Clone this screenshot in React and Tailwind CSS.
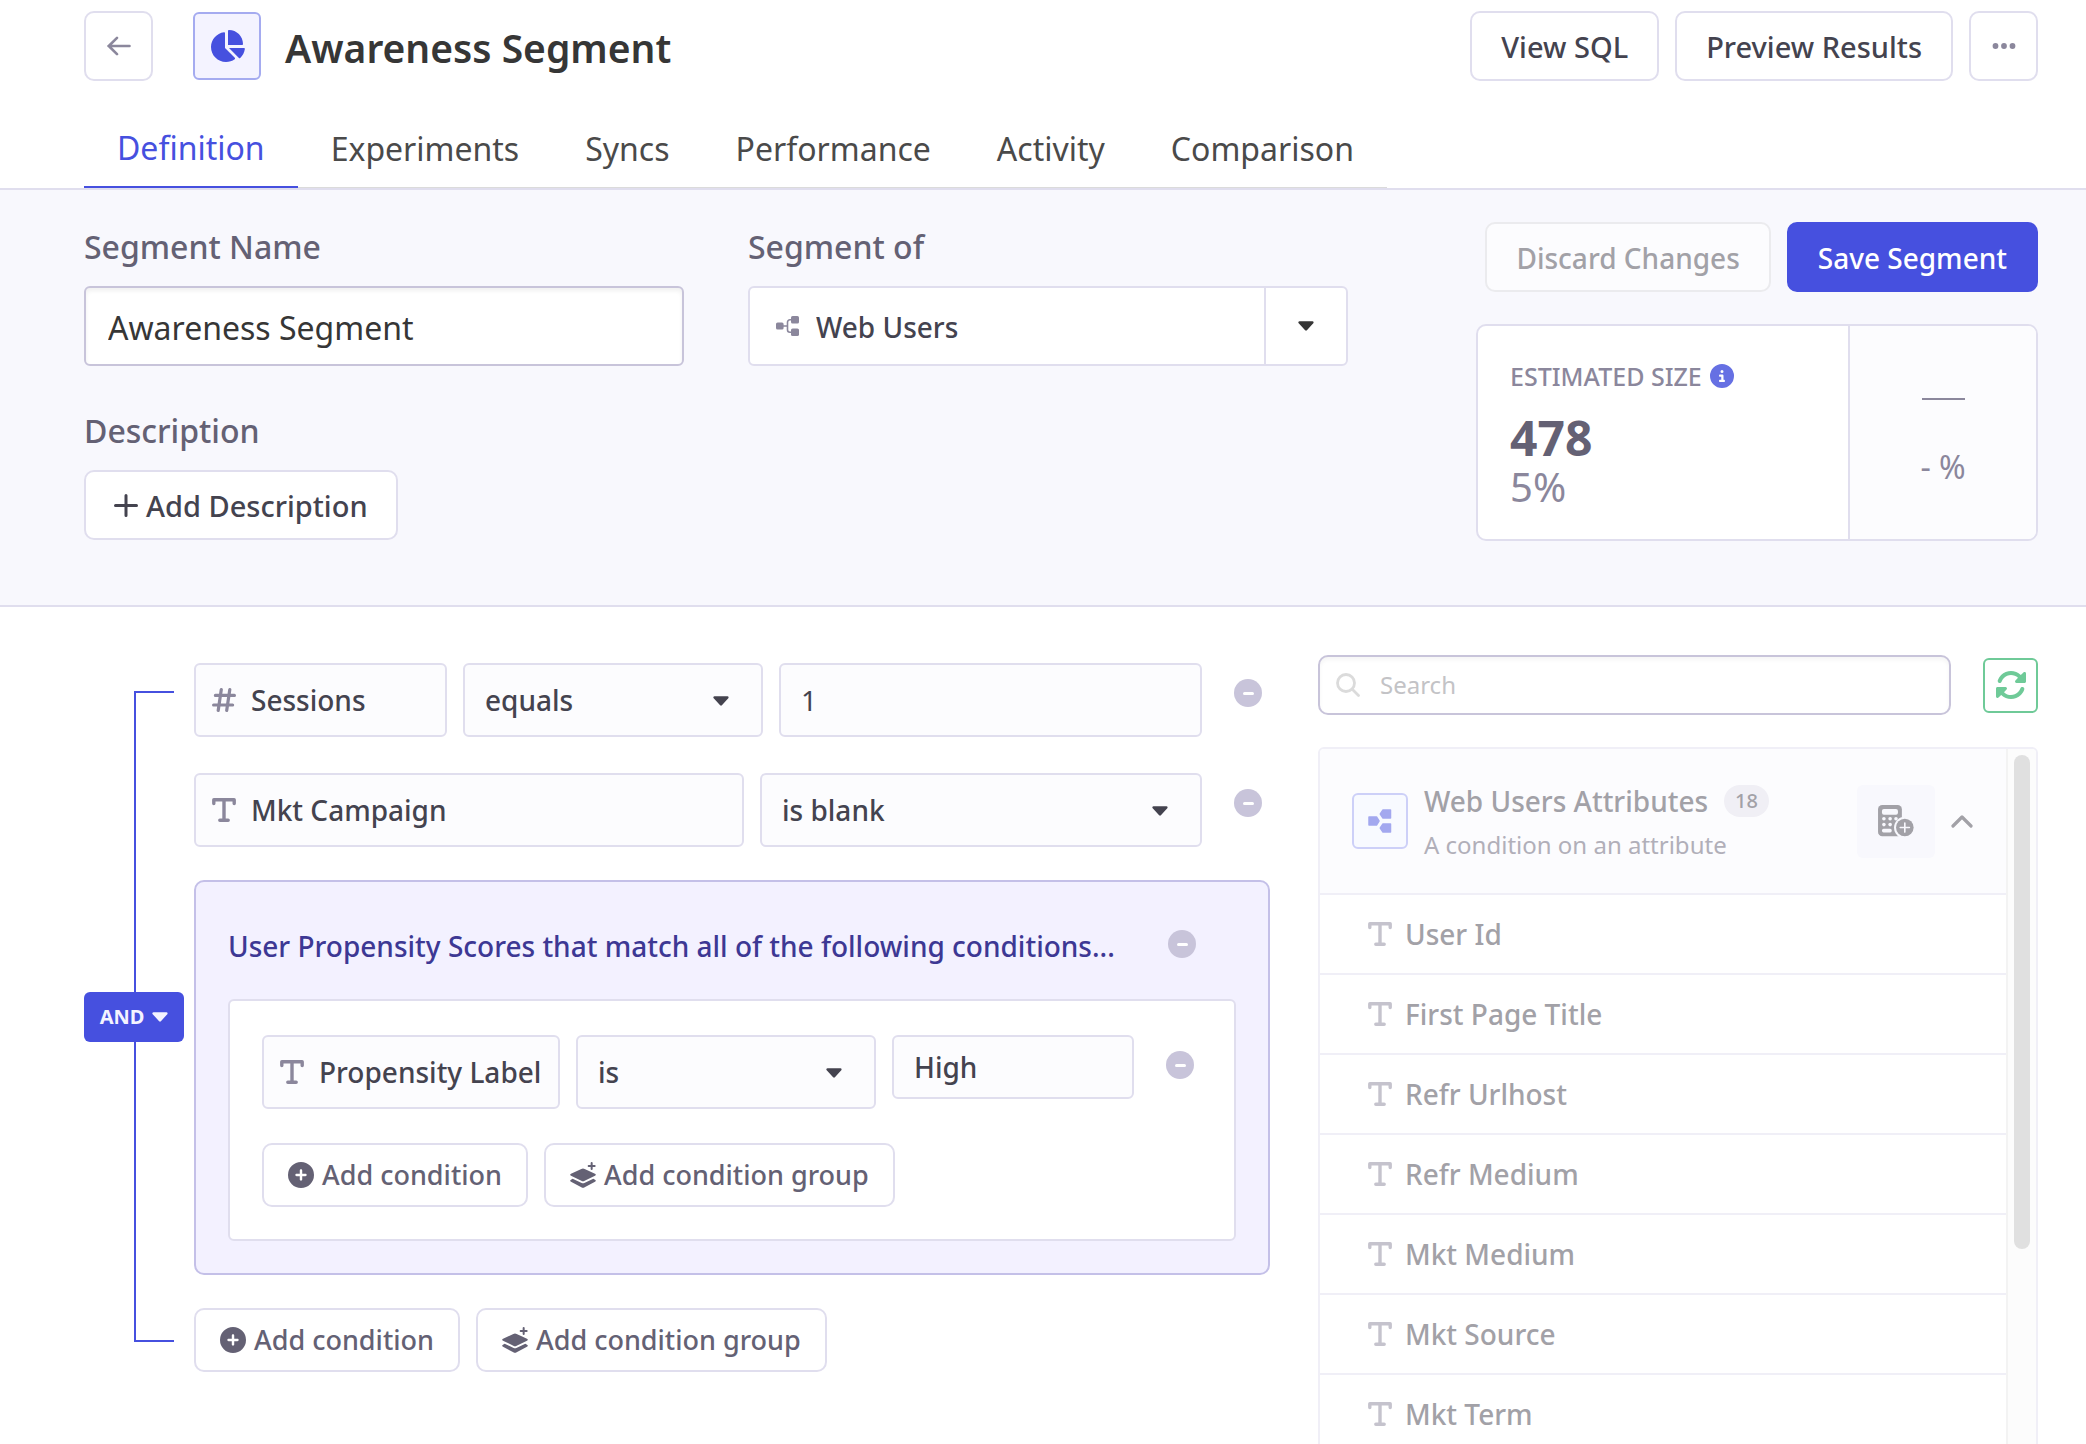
import { FaRotate, FaChartPie, FaCircleInfo, FaCirclePlus } from "react-icons/fa6";

function Caret({ className = "" }) {
  return (
    <svg viewBox="0 0 16 10" className={"pointer-events-none h-[10px] w-4 shrink-0 " + className} fill="currentColor" stroke="currentColor" strokeWidth="2.4" strokeLinejoin="round" aria-hidden="true">
      <path d="M1.6 1.4h12.8L8 8.4z" />
    </svg>
  );
}

function TextIcon({ className = "" }) {
  return (
    <svg viewBox="0 0 24 24" className={"size-6 shrink-0 " + className} fill="none" stroke="currentColor" strokeWidth="3.4" strokeLinecap="round" strokeLinejoin="round" aria-hidden="true">
      <path d="M1.8 5.6V1.8h20.4v3.8M12 2v20M7.8 22.2h8.4" />
    </svg>
  );
}

function HashIcon({ className = "" }) {
  return (
    <svg viewBox="0 0 24 24" className={"size-6 shrink-0 " + className} fill="none" stroke="currentColor" strokeWidth="3.2" strokeLinecap="round" aria-hidden="true">
      <path d="M3.4 7.4h19M1.6 17h19M9.3 1.6 6.2 22.4M17.8 1.6l-3.1 20.8" />
    </svg>
  );
}

function NodesIcon() {
  return (
    <svg viewBox="0 0 23 20" className="h-5 w-[23px] shrink-0 text-[#8b879c]" fill="currentColor" aria-hidden="true">
      <rect x="0" y="6.4" width="7.6" height="7.2" rx="1.6" />
      <rect x="15" y="0" width="8" height="7.6" rx="1.6" />
      <rect x="15" y="12.4" width="8" height="7.6" rx="1.6" />
      <path d="M7 10h4.5M15.5 3.8h-1.6a2.4 2.4 0 0 0-2.4 2.4v7.6a2.4 2.4 0 0 0 2.4 2.4h1.6" fill="none" stroke="currentColor" strokeWidth="1.6" />
    </svg>
  );
}

function LayersPlusIcon() {
  return (
    <svg viewBox="0 0 78 78" className="size-[26px] shrink-0" fill="currentColor" aria-hidden="true">
      <path d="M34 21q5-3 10 0l31 14q5 3 0 6L44 56q-5 3-10 0L3 41q-5-3 0-6z" />
      <path d="M3 53l5-3 27 13q4 2 8 0l27-13 5 3q5 3 0 6L44 76q-5 3-10 0L3 59q-5-3 0-6z" />
      <path d="M65 3v18M56 12h18" fill="none" stroke="currentColor" strokeWidth="6" strokeLinecap="round" />
    </svg>
  );
}

function CalculatorPlusIcon() {
  return (
    <svg viewBox="0 0 110 98" className="h-8 w-9" aria-hidden="true">
      <rect width="73" height="96" rx="13" fill="#a2a1a7" />
      <g fill="#f8f8fd">
        <rect x="12" y="12" width="49" height="18" rx="6" />
        <circle cx="18" cy="42" r="5.500" />
        <circle cx="37" cy="42" r="5.500" />
        <circle cx="55" cy="42" r="5.500" />
        <circle cx="18" cy="60" r="5.500" />
        <circle cx="37" cy="60" r="5.500" />
        <rect x="12" y="73" width="30" height="11" rx="5" />
        <circle cx="82" cy="69" r="33" />
      </g>
      <circle cx="82" cy="69" r="27" fill="#a2a1a7" />
      <path d="M82 55v28M68 69h28" stroke="#f8f8fd" strokeWidth="5" strokeLinecap="round" />
    </svg>
  );
}

const FIELD = "h-[74px] rounded-md border-2 border-[#e0deee] bg-[#fcfcfe]";
const BUTTON = "flex h-[70px] items-center rounded-[10px] border-2 border-[#e0deee] bg-white pt-0.5 text-[29px] font-medium text-[#44434f] whitespace-nowrap";

function Attribute({ icon, children, className = "" }) {
  return (
    <div className={FIELD + " flex shrink-0 items-center gap-[15px] px-4 " + className}>
      {icon}
      <span className="whitespace-nowrap">{children}</span>
    </div>
  );
}

function Operator({ value, label, className = "" }) {
  return (
    <div className={FIELD + " relative flex " + className}>
      <select aria-label={label} defaultValue={value} className="w-full appearance-none rounded-md bg-transparent pr-14 pl-5 outline-none">
        <option>{value}</option>
      </select>
      <Caret className="absolute top-[31px] right-8" />
    </div>
  );
}

function RemoveButton({ label, className = "" }) {
  return (
    <button type="button" aria-label={label} className={"mt-4 flex size-7 shrink-0 items-center justify-center rounded-full bg-[#c8c4da] " + className}>
      <span className="h-[3px] w-[11px] rounded-full bg-white" />
    </button>
  );
}

function AddButtons() {
  const base = "flex h-16 items-center gap-2 rounded-[10px] border-2 border-[#e0deee] bg-white px-6 text-[27px] font-medium text-[#646174] whitespace-nowrap";
  return (
    <div className="flex gap-4">
      <button type="button" className={base}>
        <FaCirclePlus className="size-[26px]" />
        Add condition
      </button>
      <button type="button" className={base}>
        <LayersPlusIcon />
        Add condition group
      </button>
    </div>
  );
}

const TABS = ["Definition", "Experiments", "Syncs", "Performance", "Activity", "Comparison"];
const ATTRIBUTES = ["User Id", "First Page Title", "Refr Urlhost", "Refr Medium", "Mkt Medium", "Mkt Source", "Mkt Term"];

function Header() {
  return (
    <header className="border-b-2 border-[#e0deee] pt-[11px] pr-12 pl-[84px]">
      <div className="flex items-center">
        <button type="button" aria-label="Back" className="flex h-[70px] w-[69px] items-center justify-center rounded-[10px] border-2 border-[#e0deee]">
          <svg viewBox="0 0 24 20" className="h-5 w-6" fill="none" stroke="#8b879c" strokeWidth="2.6" strokeLinecap="round" strokeLinejoin="round" aria-hidden="true">
            <path d="M1.500 10h21M10 1.800 1.800 10l8.200 8.200" />
          </svg>
        </button>
        <div className="ml-10 flex size-[68px] items-center justify-center rounded-md border-2 border-[#a5abf0] bg-[#f4f3ff]">
          <FaChartPie className="size-9 text-[#4650df]" />
        </div>
        <h1 className="ml-6 pt-1 text-[39px] font-semibold text-[#363636]">Awareness Segment</h1>
        <div className="ml-auto flex gap-4">
          <button type="button" className={BUTTON + " px-[29px]"}>View SQL</button>
          <button type="button" className={BUTTON + " px-[29px]"}>Preview Results</button>
          <button type="button" aria-label="More actions" className="flex h-[70px] w-[69px] items-center justify-center rounded-[10px] border-2 border-[#e0deee]">
            <svg viewBox="0 0 24 6" className="h-[6px] w-6" fill="#8b879c" aria-hidden="true">
              <circle cx="3.500" cy="3" r="2.900" />
              <circle cx="12" cy="3" r="2.900" />
              <circle cx="20.500" cy="3" r="2.900" />
            </svg>
          </button>
        </div>
      </div>
      <nav className="mt-[27px] flex w-fit text-[32px] text-[#4a4a4a] shadow-[inset_0_-1px_0_#dbdbdb]">
        {TABS.map((tab, i) => (
          <a
            key={tab}
            href={"#" + tab.toLowerCase()}
            className={i === 0 ? "h-20 border-b-2 border-[#4650df] px-[33px] leading-[80px] text-[#4650df]" : "h-20 px-[33px] leading-[82px]"}
          >
            {tab}
          </a>
        ))}
      </nav>
    </header>
  );
}

function Details() {
  const label = "block text-[32px] leading-[50px] font-medium text-[#646174]";
  return (
    <section className="flex items-start border-b-2 border-[#e0deee] bg-[#f8f8fd] pt-8 pr-12 pb-16 pl-[84px]">
      <div className="w-[600px]">
        <label htmlFor="segment-name" className={label}>Segment Name</label>
        <input
          id="segment-name"
          defaultValue="Awareness Segment"
          className="mt-[14px] h-20 w-full rounded-md border-2 border-[#c8c4da] bg-white px-[22px] pt-0.5 text-[32px] text-[#363636] shadow-[inset_0_3px_4px_rgba(10,10,10,0.06)] outline-none"
        />
        <h2 className={label + " mt-10"}>Description</h2>
        <button type="button" className={BUTTON + " mt-[14px] gap-2 px-7"}>
          <svg viewBox="0 0 24 24" className="size-6" fill="none" stroke="currentColor" strokeWidth="3" strokeLinecap="round" aria-hidden="true">
            <path d="M12 1.500v20M1.500 11.500h21" />
          </svg>
          Add Description
        </button>
      </div>
      <div className="ml-16 w-[600px]">
        <label htmlFor="segment-of" className={label}>Segment of</label>
        <div className="relative mt-[14px] flex h-20 items-center rounded-md border-2 border-[#e0deee] bg-white text-[28px] font-medium text-[#44434f]">
          <div className="flex h-full w-full items-center pr-[82px] pl-[26px]">
            <NodesIcon />
            <select id="segment-of" defaultValue="Web Users" className="h-full flex-1 appearance-none bg-transparent pt-0.5 pl-[17px] outline-none">
              <option>Web Users</option>
            </select>
          </div>
          <span className="pointer-events-none absolute inset-y-0 right-0 flex w-[82px] items-center justify-center border-l-2 border-[#e0deee] text-[#363636]">
            <Caret />
          </span>
        </div>
      </div>
      <div className="ml-auto w-[562px]">
        <div className="flex justify-end gap-4">
          <button type="button" disabled className="h-[70px] rounded-[10px] border-2 border-[#ebebee] bg-[#fcfcfe] px-[29px] pt-0.5 text-[28px] font-medium whitespace-nowrap text-[#a2a1a7]">
            Discard Changes
          </button>
          <button type="button" className="h-[70px] rounded-[10px] border-2 border-[#4650df] bg-[#4650df] px-[29px] pt-0.5 text-[28px] font-medium whitespace-nowrap text-white">
            Save Segment
          </button>
        </div>
        <div className="mt-8 flex overflow-hidden rounded-[10px] border-2 border-[#e0deee] bg-white">
          <div className="flex-1 pt-9 pb-8 pl-8">
            <div className="flex items-center gap-2 text-[25px] leading-7 font-medium text-[#8b879c]">
              ESTIMATED SIZE
              <FaCircleInfo className="size-6 text-[#6670e3]" />
            </div>
            <div className="mt-5 text-5xl leading-[56px] font-bold text-[#646174]">478</div>
            <div className="text-[40px] leading-[41px] text-[#8b879c]">5%</div>
          </div>
          <div className="flex w-[188px] flex-col items-center border-l-2 border-[#e0deee] bg-[#fcfcfe] text-[#8b879c]">
            <span className="mt-[72px] h-0.5 w-[43px] bg-[#8b879c]" />
            <span className="mt-[43px] text-[32px] leading-[48px]">- %</span>
          </div>
        </div>
      </div>
    </section>
  );
}

function Conditions() {
  return (
    <section className="flex min-w-0 flex-1 gap-[10px] pt-14 text-[28px] font-medium text-[#44434f]">
      <div className="mt-7 mb-[30px] flex w-[100px] shrink-0 flex-col">
        <div className="mr-[10px] ml-[50px] flex-1 border-t-2 border-l-2 border-[#4650df]" />
        <button type="button" className="flex h-[50px] items-center justify-center gap-2 rounded-md bg-[#4650df] text-xl font-bold text-[#f4f3ff]">
          AND
          <Caret />
        </button>
        <div className="mr-[10px] ml-[50px] flex-1 border-b-2 border-l-2 border-[#4650df]" />
      </div>
      <div className="flex min-w-0 flex-1 flex-col gap-[33px]">
        <div className="flex flex-col gap-9 pr-2">
          <div className="flex items-start gap-4">
            <Attribute icon={<HashIcon className="text-[#8b879c]" />} className="w-[253px]">Sessions</Attribute>
            <Operator value="equals" label="Sessions operator" className="w-[300px] shrink-0" />
            <input aria-label="Sessions value" defaultValue="1" className={FIELD + " min-w-0 flex-1 px-5 font-normal outline-none"} />
            <RemoveButton label="Remove Sessions condition" className="ml-4" />
          </div>
          <div className="flex items-start gap-4">
            <Attribute icon={<TextIcon className="text-[#8b879c]" />} className="w-[550px]">Mkt Campaign</Attribute>
            <Operator value="is blank" label="Mkt Campaign operator" className="flex-1" />
            <RemoveButton label="Remove Mkt Campaign condition" className="ml-4" />
          </div>
        </div>
        <div className="rounded-[10px] border-2 border-[#c4c0e8] bg-[#f3f1ff] p-8">
          <div className="mb-[21px] flex items-start justify-between pr-10">
            <h3 className="leading-[64px] whitespace-nowrap text-[#3d3894]">
              User Propensity Scores that match all of the following conditions...
            </h3>
            <RemoveButton label="Remove condition group" />
          </div>
          <div className="rounded-md border-2 border-[#e0deee] bg-white px-8 pt-[34px] pb-8">
            <div className="mb-[34px] flex items-start gap-4 pr-2">
              <Attribute icon={<TextIcon className="text-[#8b879c]" />} className="w-[298px]">Propensity Label</Attribute>
              <Operator value="is" label="Propensity Label operator" className="w-[300px] shrink-0" />
              <input aria-label="Propensity Label value" defaultValue="High" className="h-16 min-w-0 flex-1 rounded-md border-2 border-[#e0deee] bg-[#fcfcfe] px-5 outline-none" />
              <RemoveButton label="Remove Propensity Label condition" className="ml-4" />
            </div>
            <AddButtons />
          </div>
        </div>
        <AddButtons />
      </div>
    </section>
  );
}

function AttributePanel() {
  return (
    <aside className="w-[720px] shrink-0 pt-12 text-[#a2a1a7]">
      <div className="flex items-center gap-8">
        <label className="flex h-[60px] flex-1 items-center gap-5 rounded-[10px] border-2 border-[#c8c4da] px-4 shadow-[inset_0_3px_4px_rgba(10,10,10,0.04)]">
          <svg viewBox="0 0 24 24" className="size-6 shrink-0" fill="none" stroke="#dbdbdb" strokeWidth="2.800" strokeLinecap="round" aria-hidden="true">
            <circle cx="10" cy="10" r="8.500" />
            <path d="m16.500 16.500 6 6" />
          </svg>
          <input type="search" aria-label="Search" placeholder="Search" className="min-w-0 flex-1 bg-transparent text-2xl outline-none placeholder:text-[#c3c3c6]" />
        </label>
        <button type="button" aria-label="Refresh" className="flex size-[55px] items-center justify-center rounded-md border-2 border-[#6fca98] text-[#6fca98]">
          <FaRotate className="size-8" />
        </button>
      </div>
      <div className="mt-8 flex overflow-hidden rounded-md border-2 border-[#f0eff7]">
        <div className="min-w-0 flex-1">
          <div className="flex h-[146px] items-center border-b-2 border-[#f0eff7] bg-[#fcfcfe] pr-[33px] pl-8">
            <div className="flex size-14 items-center justify-center rounded-md border-2 border-[#cdd0f8] bg-[#f8faff]">
              <svg viewBox="0 0 24 24" className="size-6 text-[#a3a8ef]" fill="currentColor" stroke="currentColor" strokeWidth="1.500" strokeLinejoin="round" aria-hidden="true">
                <path d="M1 8h7.500l2.500 4-2.500 4H1zM15 1h7.500v8H15l-2.700-4zM15 15h7.500v8H15l-2.700-4z" />
              </svg>
            </div>
            <div className="ml-4 flex-1 pt-1">
              <div className="flex h-11 items-center gap-4">
                <h3 className="text-[28px] font-medium">Web Users Attributes</h3>
                <span className="flex h-8 items-center rounded-full bg-[#f0eff5] px-[11px] text-xl font-medium">18</span>
              </div>
              <p className="text-2xl leading-11 text-[#b1afb9]">A condition on an attribute</p>
            </div>
            <button type="button" aria-label="Add calculated attribute" className="flex h-[73px] w-[78px] items-center justify-center rounded-md bg-[#f8f8fd]">
              <CalculatorPlusIcon />
            </button>
            <button type="button" aria-label="Collapse" className="ml-4">
              <svg viewBox="0 0 22 13" className="h-[13px] w-[22px]" fill="none" stroke="currentColor" strokeWidth="3.200" strokeLinecap="round" strokeLinejoin="round" aria-hidden="true">
                <path d="m2 11 9-9 9 9" />
              </svg>
            </button>
          </div>
          <ul>
            {ATTRIBUTES.map((name) => (
              <li key={name} className="flex h-20 items-center gap-[13px] border-b-2 border-[#f0eff7] pl-12 text-[28px] font-medium">
                <TextIcon className="text-[#c5c3cd]" />
                {name}
              </li>
            ))}
          </ul>
        </div>
        <div className="w-[30px] border-l-2 border-[#f3f3f3] bg-[#fcfcfc] px-[6px] pt-[6px]">
          <div className="h-[494px] rounded-full bg-[#e0e0e0]" />
        </div>
      </div>
    </aside>
  );
}

export default function App() {
  return (
    <div className="h-screen overflow-hidden bg-white font-['Noto_Sans',sans-serif]">
      <Header />
      <Details />
      <main className="flex items-start gap-12 pr-12 pl-[84px]">
        <Conditions />
        <AttributePanel />
      </main>
    </div>
  );
}
